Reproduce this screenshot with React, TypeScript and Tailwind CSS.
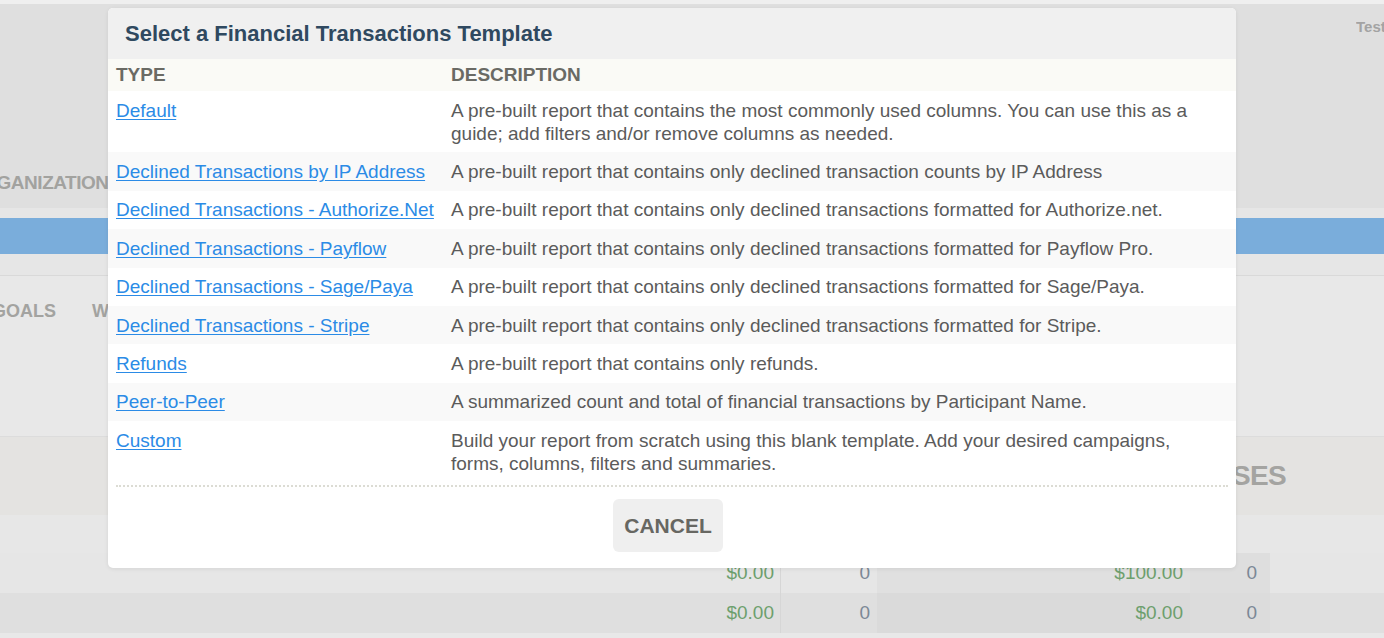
import React from 'react'

type Template = { name: string; description: string }

const templates: Template[] = [
  {
    name: 'Default',
    description:
      'A pre-built report that contains the most commonly used columns. You can use this as a guide; add filters and/or remove columns as needed.',
  },
  {
    name: 'Declined Transactions by IP Address',
    description: 'A pre-built report that contains only declined transaction counts by IP Address',
  },
  {
    name: 'Declined Transactions - Authorize.Net',
    description: 'A pre-built report that contains only declined transactions formatted for Authorize.net.',
  },
  {
    name: 'Declined Transactions - Payflow',
    description: 'A pre-built report that contains only declined transactions formatted for Payflow Pro.',
  },
  {
    name: 'Declined Transactions - Sage/Paya',
    description: 'A pre-built report that contains only declined transactions formatted for Sage/Paya.',
  },
  {
    name: 'Declined Transactions - Stripe',
    description: 'A pre-built report that contains only declined transactions formatted for Stripe.',
  },
  { name: 'Refunds', description: 'A pre-built report that contains only refunds.' },
  {
    name: 'Peer-to-Peer',
    description: 'A summarized count and total of financial transactions by Participant Name.',
  },
  {
    name: 'Custom',
    description:
      'Build your report from scratch using this blank template. Add your desired campaigns, forms, columns, filters and summaries.',
  },
]

const font = { fontFamily: '"Liberation Sans", Arial, sans-serif' }

// Dimmed dashboard sitting behind the modal
function Backdrop() {
  return (
    <div className="flex flex-col w-full h-full bg-[#e6e6e6]">
      <div className="h-[4px] bg-[#efefef]" />
      <div className="h-[204px] bg-[#dfdfdf] flex flex-col">
        <div className="flex justify-end pt-[12px]">
          <span className="text-[15px] font-bold text-[#a3a3a3] w-[28px] overflow-hidden whitespace-nowrap">Test</span>
        </div>
        <div className="flex-1" />
        <div className="pb-[11px] whitespace-nowrap overflow-hidden">
          <span className="ml-[-31px] text-[19px] font-bold text-[#a2a29f] tracking-tight">ORGANIZATION</span>
        </div>
      </div>
      <div className="h-[10px] bg-[#e6e6e6]" />
      <div className="h-[36px] bg-[#7aaddb]" />
      <div className="h-[22px] bg-[#e6e6e6] border-b border-[#d9d9d9]" />
      <div className="h-[161px] bg-[#e8e8e8] border-b border-[#dcdcdc] flex items-start pt-[22px] whitespace-nowrap overflow-hidden">
        <span className="ml-[-8px] text-[18px] font-bold text-[#a3a3a0]">GOALS</span>
        <span className="ml-[36px] text-[18px] font-bold text-[#a3a3a0]">WIDGETS</span>
      </div>
      <div className="h-[78px] bg-[#e4e3e1] flex items-center justify-end pr-[98px]">
        <span className="text-[28px] font-bold text-[#a4a4a1] tracking-tight">EXPENSES</span>
      </div>
      <div className="h-[38px] bg-[#e7e7e7]" />
      <DataRow amount="$0.00" count="0" total="$100.00" totalCount="0" dark={false} />
      <DataRow amount="$0.00" count="0" total="$0.00" totalCount="0" dark />
      <div className="flex-1 bg-[#e8e8e8]" />
    </div>
  )
}

function DataRow({
  amount,
  count,
  total,
  totalCount,
  dark,
}: {
  amount: string
  count: string
  total: string
  totalCount: string
  dark: boolean
}) {
  return (
    <div className={`h-[40px] flex text-[19px] ${dark ? 'bg-[#dfdfdf]' : 'bg-[#e6e6e6]'}`}>
      <div className="w-[780px] flex items-center justify-end pr-[6px] text-[#6d9f6d]">{amount}</div>
      <div className="w-[97px] flex items-center justify-end pr-[7px] border-l border-[#d6d6d6] text-[#7b8896]">{count}</div>
      <div className={`w-[313px] flex items-center justify-end pr-[7px] text-[#6d9f6d] ${dark ? 'bg-[#dadada]' : 'bg-[#e0e0e0]'}`}>
        {total}
      </div>
      <div className={`w-[80px] flex items-center justify-end pr-[13px] text-[#7b8896] ${dark ? 'bg-[#dcdcdc]' : 'bg-[#dedede]'}`}>
        {totalCount}
      </div>
      <div className="flex-1" />
    </div>
  )
}

function TemplateModal() {
  return (
    <div className="absolute left-[108px] top-[8px] w-[1128px] bg-white rounded-[5px] shadow-[0_1px_4px_rgba(0,0,0,0.08)] overflow-hidden">
      <div className="h-[51px] bg-[#f0f0f0] flex items-center pl-[17px]">
        <h2 className="text-[22px] font-bold text-[#2f4960]">Select a Financial Transactions Template</h2>
      </div>
      <table className="w-full border-collapse text-[19px]">
        <thead>
          <tr className="bg-[#fafaf6] h-[32px]">
            <th className="w-[335px] text-left pl-[8px] font-bold text-[#6a6a64]">TYPE</th>
            <th className="text-left pl-[8px] font-bold text-[#6a6a64]">DESCRIPTION</th>
          </tr>
        </thead>
        <tbody>
          {templates.map((tpl, i) => (
            <tr key={tpl.name} className={i % 2 === 1 ? 'bg-[#f9f9f9]' : 'bg-white'}>
              <td className="align-top pl-[8px] py-[7.7px] leading-[23px] whitespace-nowrap">
                <a href="#" className="text-[#2b8be6] underline underline-offset-[2px]">
                  {tpl.name}
                </a>
              </td>
              <td className="align-top pl-[8px] pr-[8px] py-[7.7px] leading-[23px] text-[#5b5b5b]">{tpl.description}</td>
            </tr>
          ))}
        </tbody>
      </table>
      <div className="mx-[8px] mt-[3px] border-t-2 border-dotted border-[#dcdcd4]" />
      <div className="flex justify-center pt-[12px] pb-[16px] pr-[8px]">
        <button
          type="button"
          className="w-[110px] h-[53px] rounded-[6px] bg-[#efefef] text-[21px] font-bold text-[#676762]"
        >
          CANCEL
        </button>
      </div>
    </div>
  )
}

export default function App() {
  return (
    <div className="relative w-[1384px] h-[638px] overflow-hidden" style={font}>
      <Backdrop />
      <TemplateModal />
    </div>
  )
}
